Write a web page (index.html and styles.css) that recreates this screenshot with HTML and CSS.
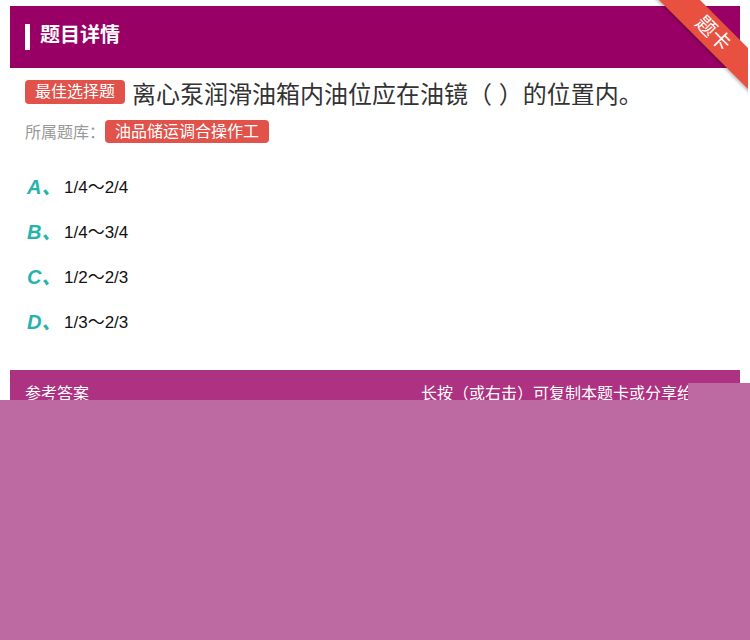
FILE: index.html
```
<!DOCTYPE html>
<html lang="zh">
<head>
<meta charset="utf-8">
<link rel="stylesheet" href="styles.css">
</head>
<body>
<div class="page">
  <div class="header">
    <span class="header-bar"></span>
    <span class="header-title">题目详情</span>
  </div>
  <div class="ribbon-wrap"><div class="ribbon">题卡</div></div>
  <div class="content">
    <div class="question">
      <span class="tag tag-type">最佳选择题</span>
      <span class="q-text">离心泵润滑油箱内油位应在油镜（ ）的位置内。</span>
    </div>
    <div class="bank">
      <span class="bank-label">所属题库：</span>
      <span class="tag tag-bank">油品储运调合操作工</span>
    </div>
    <ul class="options">
      <li class="option"><span class="opt-key">A、</span><span class="opt-text">1/4～2/4</span></li>
      <li class="option"><span class="opt-key">B、</span><span class="opt-text">1/4～3/4</span></li>
      <li class="option"><span class="opt-key">C、</span><span class="opt-text">1/2～2/3</span></li>
      <li class="option"><span class="opt-key">D、</span><span class="opt-text">1/3～2/3</span></li>
    </ul>
  </div>
  <div class="answer-bar">
    <span>参考答案</span>
    <span>长按（或右击）可复制本题卡或分享给好友</span>
  </div>
</div>
<div class="overlay overlay-main"></div>
<div class="overlay overlay-tab"></div>
</body>
</html>
```
FILE: styles.css
```
html, body {
  margin: 0;
  padding: 0;
  background: #fff;
  font-family: "Liberation Sans", "Noto Sans CJK SC", sans-serif;
}
.page {
  padding: 6px 10px 0;
  height: 634px;
  overflow: hidden;
}
.header {
  height: 62px;
  background: #990066;
  display: flex;
  align-items: center;
  padding-left: 15px;
}
.header-bar {
  width: 5px;
  height: 26px;
  background: #fff;
  margin-right: 10px;
}
.header-title {
  color: #fff;
  font-size: 20px;
  font-weight: bold;
  margin-bottom: 7px;
}
.ribbon-wrap {
  position: absolute;
  top: 0;
  right: 2px;
  width: 98px;
  height: 100px;
  overflow: hidden;
}
.ribbon {
  position: absolute;
  left: -17px;
  top: 19px;
  width: 160px;
  height: 29px;
  line-height: 29px;
  background: #e8513f;
  color: #fff;
  font-size: 20px;
  text-align: center;
  transform: rotate(45deg);
  box-shadow: 0 2px 3px rgba(0,0,0,0.25);
}
.content {
  padding: 12px 15px 0;
}
.question {
  display: flex;
  align-items: center;
  height: 24px;
}
.tag {
  background: #e0524a;
  color: #fff;
  font-size: 16px;
  border-radius: 4px;
  padding: 0 10px;
  height: 24px;
  line-height: 24px;
  display: inline-block;
}
.q-text {
  margin-left: 7px;
  font-size: 24px;
  color: #333;
}
.bank {
  display: flex;
  align-items: center;
  margin-top: 15px;
}
.bank-label {
  font-size: 16px;
  color: #999;
}
.tag-bank {
  height: 23px;
  line-height: 23px;
}
.options {
  list-style: none;
  margin: 30px 0 0;
  padding: 0;
}
.option {
  display: flex;
  align-items: center;
  height: 24px;
  margin-bottom: 21px;
}
.opt-key {
  color: #26b3ad;
  font-size: 20px;
  font-weight: bold;
  font-style: italic;
  width: 37px;
  padding-left: 2px;
}
.opt-text {
  font-size: 17px;
  color: #111;
}
.answer-bar {
  margin-top: 38px;
  height: 44px;
  background: #ad3281;
  color: #fff;
  font-size: 16px;
  display: flex;
  justify-content: space-between;
  align-items: center;
  padding: 0 15px;
}
.overlay {
  position: absolute;
  background: #bd6aa3;
}
.overlay-main {
  left: 0;
  top: 400px;
  width: 750px;
  height: 240px;
}
.overlay-tab {
  left: 688px;
  top: 383px;
  width: 62px;
  height: 17px;
}
```
